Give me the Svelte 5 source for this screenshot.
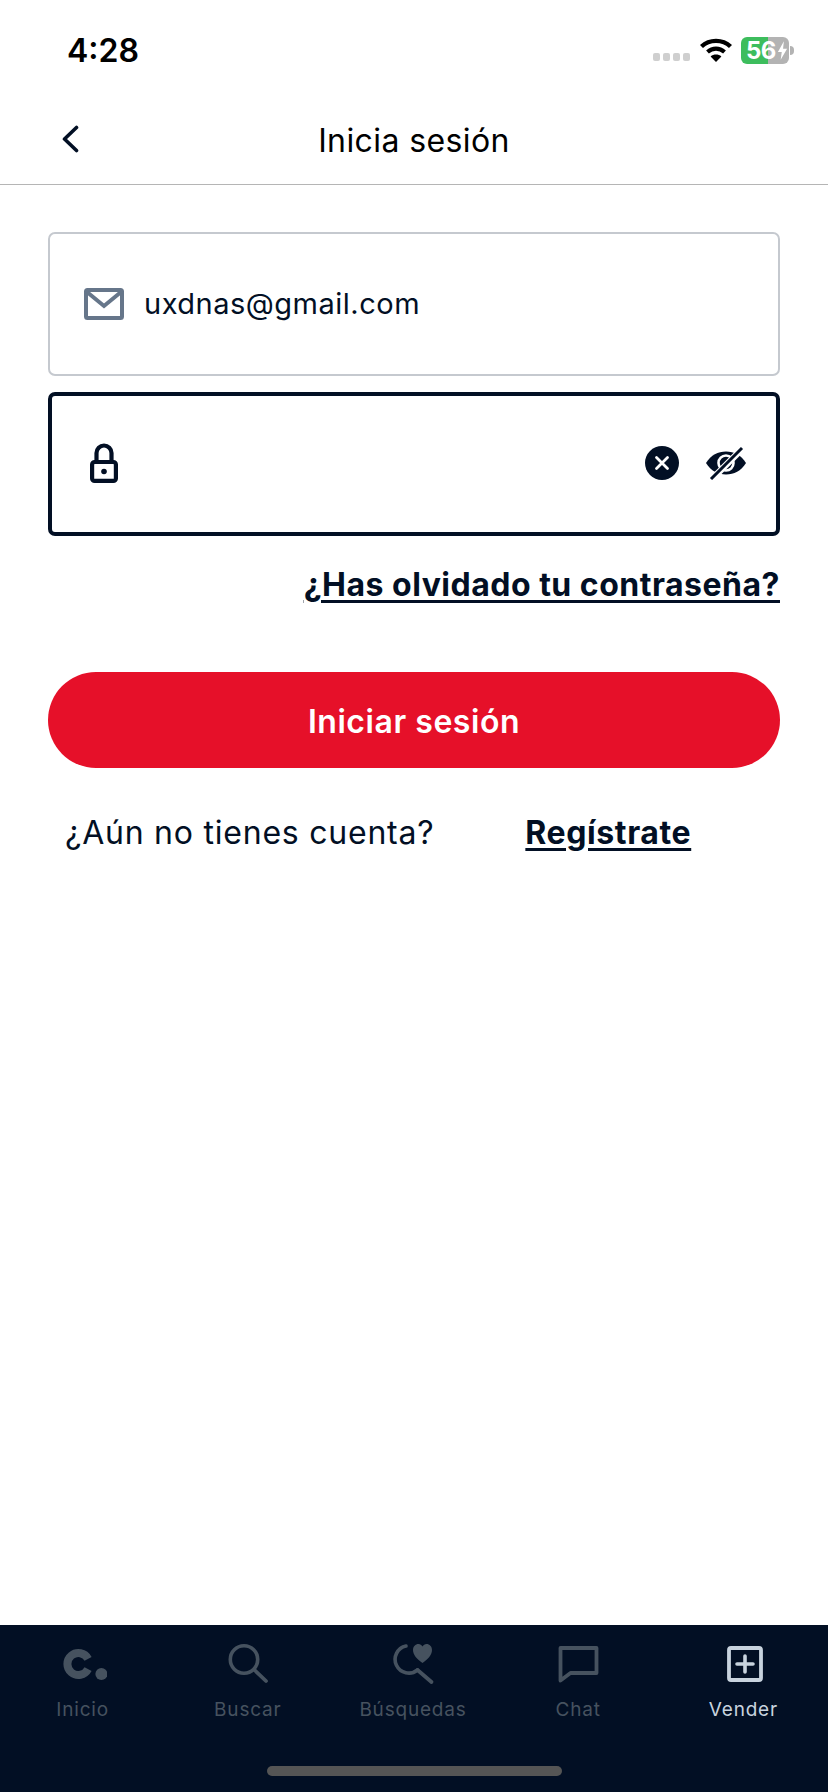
<script>
  let email = "uxdnas@gmail.com";
  const tabs = [
    { label: "Inicio", icon: "home" },
    { label: "Buscar", icon: "search" },
    { label: "Búsquedas", icon: "saved" },
    { label: "Chat", icon: "chat" },
    { label: "Vender", icon: "sell", active: true }
  ];
</script>

<main class="screen">
  <div class="status">
    <span class="time">4:28</span>
    <div class="status-right">
      <div class="dots"><i></i><i></i><i></i><i></i></div>
      <svg class="wifi" viewBox="0 0 32 24" width="32" height="24">
        <path d="M1.5 8.5C9.5 1 22.5 1 30.5 8.5" fill="none" stroke="#000" stroke-width="4.4"/>
        <path d="M7.5 14C12.5 9.6 19.5 9.6 24.5 14" fill="none" stroke="#000" stroke-width="4.2"/>
        <path d="M16 24L10.6 18.4C13.6 15.8 18.4 15.8 21.4 18.4Z" fill="#000"/>
      </svg>
      <div class="battery"><span>56</span>
        <svg viewBox="0 0 12 20" width="11" height="19"><path d="M7.5 0L1 11.5H5.2L4 20L11 8H6.6Z" fill="#fff"/></svg>
      </div>
      <div class="battery-tip"></div>
    </div>
  </div>

  <header class="nav">
    <button class="back" aria-label="Volver">
      <svg viewBox="0 0 18 28" width="18" height="28"><path d="M15.5 2.5L3.5 14L15.5 25.5" fill="none" stroke="#020f24" stroke-width="3.6" stroke-linecap="round" stroke-linejoin="round"/></svg>
    </button>
    <h1>Inicia sesión</h1>
  </header>

  <section class="form">
    <div class="field">
      <svg class="mail" viewBox="0 0 40 32" width="40" height="32">
        <rect x="2" y="2" width="36" height="28" rx="1.5" fill="none" stroke="#66768a" stroke-width="4"/>
        <path d="M3 4L20 18L37 4" fill="none" stroke="#66768a" stroke-width="4"/>
      </svg>
      <span class="value">{email}</span>
    </div>

    <div class="field focused">
      <svg class="lock" viewBox="0 0 28 40" width="28" height="40">
        <path d="M6.5 19V10a7.5 7.5 0 0 1 15 0v9" fill="none" stroke="#020f24" stroke-width="4.2"/>
        <rect x="2.1" y="19" width="23.8" height="18.9" rx="2.5" fill="none" stroke="#020f24" stroke-width="4.2"/>
        <circle cx="14" cy="28.5" r="2.8" fill="#020f24"/>
      </svg>
      <div class="actions">
        <svg viewBox="0 0 34 34" width="34" height="34">
          <circle cx="17" cy="17" r="17" fill="#020f24"/>
          <path d="M11.5 11.5L22.5 22.5M22.5 11.5L11.5 22.5" stroke="#fff" stroke-width="2.8" stroke-linecap="round"/>
        </svg>
        <svg viewBox="0 0 40 34" width="40" height="34">
          <path d="M0 17C5 9 12 5.5 20 5.5S35 9 40 17C35 25 28 28.5 20 28.5S5 25 0 17Z" fill="#020f24"/>
          <circle cx="20" cy="17" r="7.5" fill="none" stroke="#fff" stroke-width="2.6"/>
          <path d="M5 34L36 3" stroke="#fff" stroke-width="6.5"/>
          <path d="M5 33L36 2" stroke="#020f24" stroke-width="3"/>
        </svg>
      </div>
    </div>

    <a class="forgot" href="#forgot">¿Has olvidado tu contraseña?</a>

    <button class="submit">Iniciar sesión</button>

    <div class="signup">
      <span>¿Aún no tienes cuenta?</span>
      <a href="#signup">Regístrate</a>
    </div>
  </section>

  <nav class="tabbar">
    <div class="tabs">
      {#each tabs as tab}
        <div class="tab" class:active={tab.active}>
          <svg viewBox="0 0 48 44" width="48" height="44">
            {#if tab.icon === "home"}
              <path d="M29.1 17.8A11 11 0 1 0 29.1 28.2" fill="none" stroke="currentColor" stroke-width="8"/>
              <circle cx="42.4" cy="33" r="6" fill="currentColor"/>
            {:else if tab.icon === "search"}
              <circle cx="20" cy="18.5" r="13.7" fill="none" stroke="currentColor" stroke-width="3.6"/>
              <path d="M30.5 29L42 40" stroke="currentColor" stroke-width="3.8" stroke-linecap="round"/>
            {:else if tab.icon === "saved"}
              <path d="M17 5A13.7 13.7 0 1 0 28.5 29" fill="none" stroke="currentColor" stroke-width="3.6" stroke-linecap="round"/>
              <path d="M28.5 29L42.5 41" stroke="currentColor" stroke-width="3.8" stroke-linecap="round"/>
              <path d="M33.5 22C28 18 24 14 24 9C24 5.5 26.5 3 29.5 3C31.2 3 32.6 3.9 33.5 5.4C34.4 3.9 35.8 3 37.5 3C40.5 3 43 5.5 43 9C43 14 39 18 33.5 22Z" fill="currentColor"/>
            {:else if tab.icon === "chat"}
              <path d="M6.5 7H42.5V32H16.5L6.5 39.5Z" fill="none" stroke="currentColor" stroke-width="3.8" stroke-linejoin="round"/>
            {:else}
              <rect x="10" y="7" width="32" height="32" rx="2" fill="none" stroke="currentColor" stroke-width="3.8"/>
              <path d="M26 15V31M18 23H34" stroke="currentColor" stroke-width="3.6" stroke-linecap="round"/>
            {/if}
          </svg>
          <span>{tab.label}</span>
        </div>
      {/each}
    </div>
    <div class="home-indicator"></div>
  </nav>
</main>

<style>
  :global(body) {
    margin: 0;
    background: #fff;
  }

  .screen {
    width: 828px;
    height: 1792px;
    display: flex;
    flex-direction: column;
    font-family: Inter, "Liberation Sans", sans-serif;
    color: #020f24;
    overflow: hidden;
  }

  .status {
    height: 100px;
    flex: none;
    display: flex;
    justify-content: space-between;
    align-items: flex-start;
    padding: 32px 34px 0 67px;
    box-sizing: border-box;
  }

  .time {
    font-size: 32px;
    line-height: 38px;
    font-weight: 600;
    color: #000;
  }

  .status-right {
    display: flex;
    align-items: center;
    height: 34px;
    margin-top: 1px;
  }

  .dots {
    display: flex;
    gap: 3px;
    margin: 14px 10px 0 0;
  }

  .dots i {
    width: 7px;
    height: 8px;
    border-radius: 2px;
    background: #cfcfcf;
  }

  .wifi {
    margin-right: 9px;
  }

  .battery {
    width: 48px;
    height: 27px;
    border-radius: 6px;
    background: linear-gradient(90deg, #3dbd5d 57%, #b3b3b3 57%);
    display: flex;
    align-items: center;
    padding-left: 5px;
    box-sizing: border-box;
    gap: 1px;
  }

  .battery span {
    color: #fff;
    font-size: 24px;
    font-weight: 700;
    line-height: 27px;
    letter-spacing: -0.5px;
  }

  .battery-tip {
    width: 4px;
    height: 9px;
    margin-left: 1px;
    border-radius: 0 4px 4px 0;
    background: #b3b3b3;
  }

  .nav {
    height: 85px;
    flex: none;
    display: flex;
    align-items: center;
    justify-content: center;
    position: relative;
    border-bottom: 1px solid #b5b5b5;
    box-sizing: border-box;
    padding-bottom: 3px;
  }

  .nav h1 {
    margin: 0;
    font-size: 32px;
    font-weight: 400;
    line-height: 40px;
    letter-spacing: 0.4px;
    color: #000;
  }

  .back {
    position: absolute;
    left: 61px;
    top: 25px;
    padding: 0;
    border: 0;
    background: none;
    line-height: 0;
  }

  .form {
    flex: 1;
    display: flex;
    flex-direction: column;
    padding: 47px 48px 0;
  }

  .field {
    height: 144px;
    box-sizing: border-box;
    border: 2px solid #c5c9cf;
    border-radius: 7px;
    display: flex;
    align-items: center;
    padding-left: 34px;
  }

  .field.focused {
    margin-top: 16px;
    border: 4px solid #020f24;
    padding: 0 30px 0 38px;
  }

  .mail {
    margin-right: 20px;
  }

  .value {
    font-size: 29px;
    line-height: 34px;
    letter-spacing: 0.5px;
  }

  .lock {
    margin-top: -2px;
  }

  .actions {
    margin-left: auto;
    display: flex;
    align-items: center;
    gap: 27px;
    margin-top: -3px;
  }

  .forgot {
    align-self: flex-end;
    margin-top: 29px;
    font-size: 32px;
    line-height: 40px;
    font-weight: 700;
    letter-spacing: 0.5px;
    color: #020f24;
    text-decoration: underline;
    text-underline-offset: 4px;
  }

  .submit {
    margin-top: 67px;
    height: 96px;
    padding: 3px 0 0;
    border: 0;
    border-radius: 48px;
    background: #e61029;
    color: #fff;
    font: 600 32px/40px Inter, "Liberation Sans", sans-serif;
    letter-spacing: 0.55px;
  }

  .signup {
    display: flex;
    margin-top: 45px;
    padding-left: 17px;
    font-size: 32px;
    line-height: 40px;
    letter-spacing: 0.77px;
  }

  .signup a {
    margin-left: 91px;
    font-weight: 700;
    letter-spacing: 0.6px;
    color: #020f24;
    text-decoration: underline;
    text-underline-offset: 4px;
  }

  .tabbar {
    height: 167px;
    flex: none;
    background: #020f24;
    position: relative;
  }

  .tabs {
    display: grid;
    grid-template-columns: repeat(5, 1fr);
    padding: 16px 2px 0 0;
  }

  .tab {
    display: flex;
    flex-direction: column;
    align-items: center;
    color: #46525f;
  }

  .tab.active {
    color: #c8d3de;
  }

  .tab span {
    margin-top: 13px;
    font-size: 19px;
    line-height: 24px;
    letter-spacing: 0.8px;
    font-weight: 400;
  }

  .home-indicator {
    position: absolute;
    left: 267px;
    bottom: 16px;
    width: 295px;
    height: 10px;
    border-radius: 5px;
    background: #555555;
  }
</style>
